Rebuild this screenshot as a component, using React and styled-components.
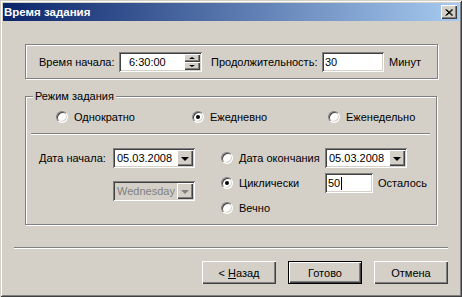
import React from 'react';
import styled, { createGlobalStyle, css } from 'styled-components';

const Global = createGlobalStyle`
	* { box-sizing: border-box; }
	body {
		margin: 0;
		background: #d4d0c8;
	}
`;

const raised = css`
	background: #d4d0c8;
	box-shadow: inset 1px 1px #fff, inset -1px -1px #404040, inset -2px -2px #808080;
`;

const sunken = css`
	background: #fff;
	box-shadow: inset 1px 1px #808080, inset -1px -1px #fff, inset 2px 2px #404040, inset -2px -2px #d4d0c8;
`;

const etched = css`
	border: 1px solid #808080;
	box-shadow: inset 1px 1px #fff, 1px 1px #fff;
`;

const Window = styled.div`
	width: 462px;
	height: 297px;
	padding: 3px;
	display: flex;
	flex-direction: column;
	background: #d4d0c8;
	box-shadow: inset 1px 1px #d4d0c8, inset -1px -1px #404040, inset 2px 2px #fff, inset -2px -2px #808080;
	font-family: 'Liberation Sans', Arial, sans-serif;
	font-size: 11px;
	color: #000;
`;

const TitleBar = styled.div`
	height: 18px;
	display: flex;
	align-items: center;
	justify-content: space-between;
	padding: 0 2px 0 1px;
	background: linear-gradient(to right, #0a246a, #a6caf0);
	color: #fff;
	font-weight: bold;
	font-size: 11.5px;
`;

const CloseButton = styled.div`
	${raised};
	width: 16px;
	height: 14px;
	display: flex;
	align-items: center;
	justify-content: center;
`;

const Content = styled.div`
	flex: 1;
	display: flex;
	flex-direction: column;
	padding: 0 11px;
`;

const TopGroup = styled.div`
	${etched};
	margin: 23px 0 0 11px;
	width: 413px;
	height: 35px;
	display: flex;
	align-items: center;
	padding-left: 13px;
`;

const Label = styled.span`
	width: ${(p) => (p.$w ? `${p.$w}px` : 'auto')};
	margin-left: ${(p) => p.$ml || 0}px;
	white-space: nowrap;
	flex-shrink: 0;
`;

const Field = styled.div`
	${sunken};
	width: ${(p) => p.$w}px;
	height: 20px;
	display: flex;
	align-items: center;
	padding: 2px;
	margin-left: ${(p) => p.$ml || 0}px;
	flex-shrink: 0;
	color: ${(p) => (p.$disabled ? '#808080' : '#000')};
	background: ${(p) => (p.$disabled ? '#d4d0c8' : '#fff')};
`;

const FieldText = styled.span`
	flex: 1;
	padding-left: ${(p) => p.$pl || 1}px;
	display: flex;
	align-items: center;
	overflow: hidden;
	white-space: nowrap;
`;

const Caret = styled.span`
	display: inline-block;
	width: 1px;
	height: 13px;
	background: #000;
	margin-left: 1px;
`;

const Spinner = styled.div`
	width: 16px;
	height: 16px;
	display: flex;
	flex-direction: column;
`;

const SpinButton = styled.div`
	${raised};
	height: 8px;
	display: flex;
	align-items: center;
	justify-content: center;
`;

const Arrow = styled.span`
	width: 0;
	height: 0;
	border-left: ${(p) => p.$size}px solid transparent;
	border-right: ${(p) => p.$size}px solid transparent;
	${(p) => (p.$up ? 'border-bottom' : 'border-top')}: ${(p) => p.$size - (p.$size > 3 ? 0 : 1)}px solid ${(p) => p.$color || '#000'};
`;

const DropButton = styled.div`
	${raised};
	width: 16px;
	height: 16px;
	display: flex;
	align-items: center;
	justify-content: center;
	padding-top: 1px;
	flex-shrink: 0;
`;

const ModeGroup = styled.div`
	${etched};
	position: relative;
	margin: 17px 0 0 11px;
	width: 412px;
	height: 129px;
	padding-top: 12px;
`;

const Legend = styled.span`
	position: absolute;
	top: -8px;
	left: 7px;
	padding: 0 2px;
	background: #d4d0c8;
	line-height: 14px;
`;

const RadioRow = styled.div`
	display: grid;
	grid-template-columns: repeat(3, 136px);
	padding-left: 30px;
	height: 16px;
	align-items: center;
`;

const RadioItem = styled.label`
	display: flex;
	align-items: center;
	gap: 6px;
	width: ${(p) => (p.$w ? `${p.$w}px` : 'auto')};
	flex-shrink: 0;
	white-space: nowrap;
`;

const Circle = styled.span`
	position: relative;
	width: 12px;
	height: 12px;
	border-radius: 50%;
	background: #fff;
	border: 1px solid;
	border-color: #808080 #fff #fff #808080;
	box-shadow: inset 1px 1px #404040, inset -1px -1px #d4d0c8;
	flex-shrink: 0;
	&::after {
		content: '';
		display: ${(p) => (p.$on ? 'block' : 'none')};
		position: absolute;
		left: 3px;
		top: 3px;
		width: 4px;
		height: 4px;
		border-radius: 50%;
		background: #000;
	}
`;

const Separator = styled.div`
	height: 2px;
	border-top: 1px solid #808080;
	border-bottom: 1px solid #fff;
	margin: ${(p) => p.$m};
`;

const Lower = styled.div`
	display: grid;
	grid-template-columns: 182px 1fr;
	margin-top: 13px;
	padding-left: 13px;
`;

const Column = styled.div`
	display: flex;
	flex-direction: column;
	gap: ${(p) => p.$gap}px;
`;

const Row = styled.div`
	display: flex;
	align-items: center;
	height: 20px;
`;

const Buttons = styled.div`
	display: flex;
	justify-content: flex-end;
	gap: 12px;
	margin-top: 12px;
`;

const Button = styled.div`
	${raised};
	width: 74px;
	height: 23px;
	display: flex;
	align-items: center;
	justify-content: center;
	${(p) =>
		p.$default &&
		css`
			border: 1px solid #000;
			box-shadow: inset 1px 1px #fff, inset -1px -1px #404040, inset -2px -2px #808080;
		`}
`;

const Combo = ({ value, w, ml, disabled }) => (
	<Field $w={w} $ml={ml} $disabled={disabled}>
		<FieldText $pl={2}>{value}</FieldText>
		<DropButton>
			<Arrow $size={4} $color={disabled ? '#808080' : '#000'} />
		</DropButton>
	</Field>
);

const Radio = ({ on, children, w }) => (
	<RadioItem $w={w}>
		<Circle $on={on} />
		{children}
	</RadioItem>
);

const App = () => (
	<>
		<Global />
		<Window>
			<TitleBar>
				<span>Время задания</span>
				<CloseButton>
					<svg width='8' height='7' viewBox='0 0 8 7'>
						<path d='M0.5 0.5 L7 6.5 M7 0.5 L0.5 6.5 M1.5 0.5 L8 6.5 M8 0.5 L1.5 6.5' stroke='#000' strokeWidth='1' fill='none' />
					</svg>
				</CloseButton>
			</TitleBar>
			<Content>
				<TopGroup>
					<Label $w={80}>Время начала:</Label>
					<Field $w={83}>
						<FieldText $pl={8}>6:30:00</FieldText>
						<Spinner>
							<SpinButton>
								<Arrow $up $size={3} />
							</SpinButton>
							<SpinButton>
								<Arrow $size={3} />
							</SpinButton>
						</Spinner>
					</Field>
					<Label $w={111} $ml={9}>
						Продолжительность:
					</Label>
					<Field $w={62}>
						<FieldText>30</FieldText>
					</Field>
					<Label $ml={5}>Минут</Label>
				</TopGroup>

				<ModeGroup>
					<Legend>Режим задания</Legend>
					<RadioRow>
						<Radio>Однократно</Radio>
						<Radio on>Ежедневно</Radio>
						<Radio>Еженедельно</Radio>
					</RadioRow>
					<Separator $m='8px 6px 0 5px' />
					<Lower>
						<Column $gap={13}>
							<Row>
								<Label $w={74}>Дата начала:</Label>
								<Combo value='05.03.2008' w={82} />
							</Row>
							<Row>
								<Combo value='Wednesday' w={82} ml={74} disabled />
							</Row>
						</Column>
						<Column $gap={5}>
							<Row>
								<Radio w={104}>Дата окончания</Radio>
								<Combo value='05.03.2008' w={82} />
							</Row>
							<Row>
								<Radio on w={104}>
									Циклически
								</Radio>
								<Field $w={48}>
									<FieldText>
										50
										<Caret />
									</FieldText>
								</Field>
								<Label $ml={5}>Осталось</Label>
							</Row>
							<Row>
								<Radio>Вечно</Radio>
							</Row>
						</Column>
					</Lower>
				</ModeGroup>

				<Separator $m='22px 0 0 0' />
				<Buttons>
					<Button>
						<span>
							&lt; <u>Н</u>азад
						</span>
					</Button>
					<Button $default>Готово</Button>
					<Button>Отмена</Button>
				</Buttons>
			</Content>
		</Window>
	</>
);

export default App;
